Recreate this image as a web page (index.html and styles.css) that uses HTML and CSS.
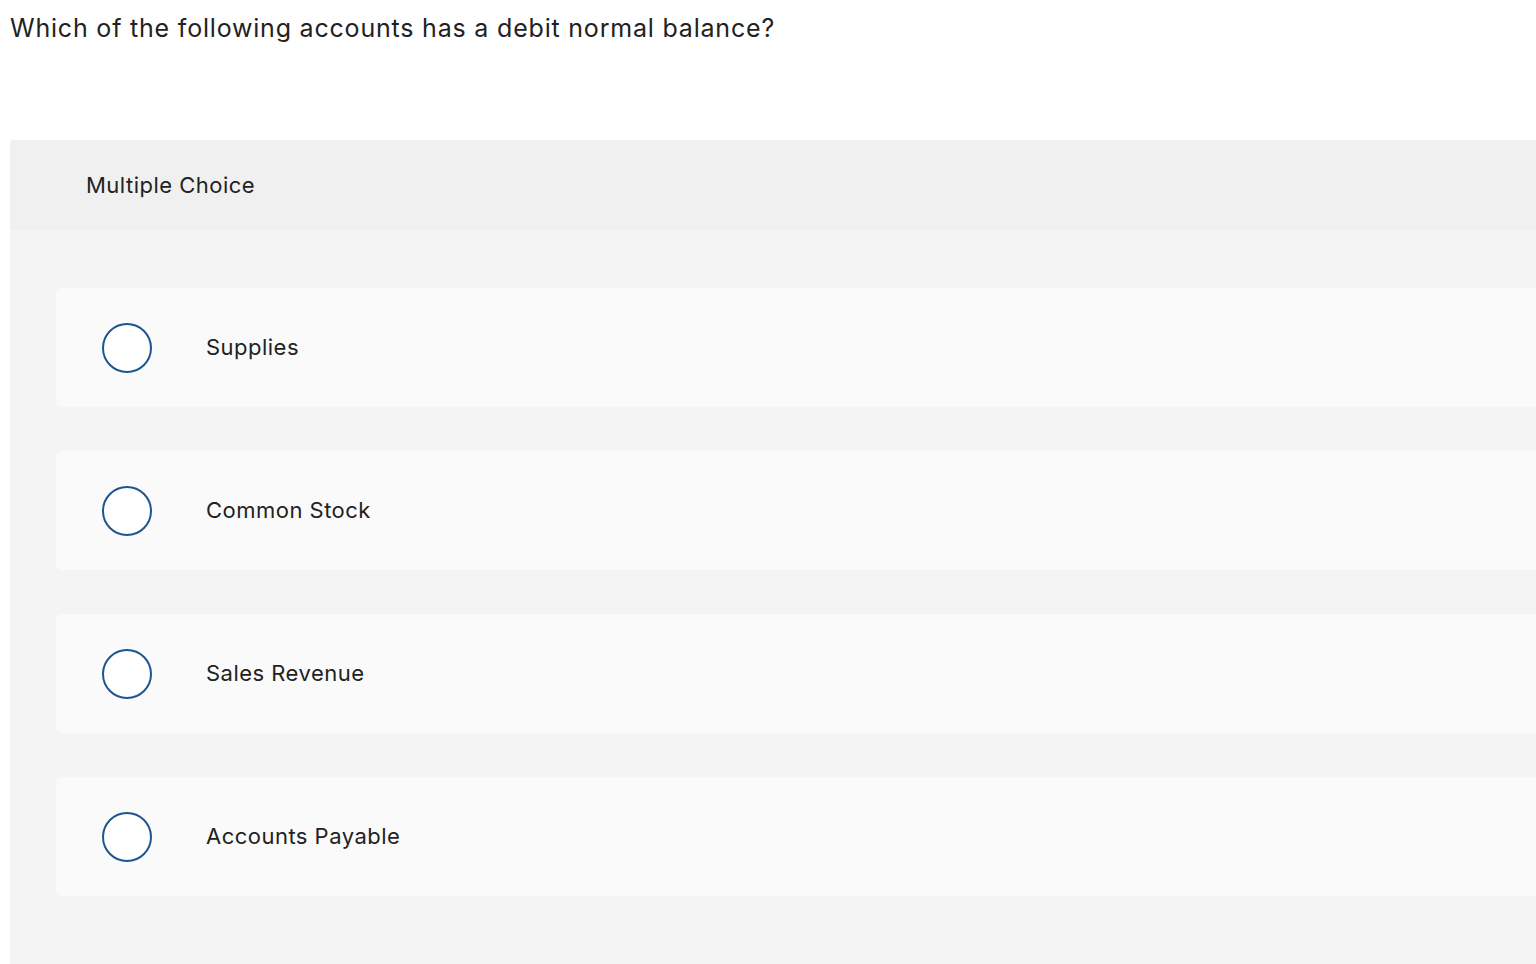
FILE: index.html
```html
<!DOCTYPE html>
<html lang="en">
  <head>
    <meta charset="UTF-8" />
    <title>Multiple Choice Question</title>
    <link rel="stylesheet" href="styles.css">
  </head>
  <body>
    <div class="question">Which of the following accounts has a debit normal balance?</div>

    <div class="answer-panel">
      <div class="panel-header">Multiple Choice</div>
      <div class="choice-list">
        <label class="choice">
          <span class="radio"></span>
          <span class="choice-text">Supplies</span>
        </label>
        <label class="choice">
          <span class="radio"></span>
          <span class="choice-text">Common Stock</span>
        </label>
        <label class="choice">
          <span class="radio"></span>
          <span class="choice-text">Sales Revenue</span>
        </label>
        <label class="choice">
          <span class="radio"></span>
          <span class="choice-text">Accounts Payable</span>
        </label>
      </div>
    </div>
  </body>
</html>
```

FILE: styles.css
```css
html,
body {
  overflow: hidden;
}

body {
  margin: 0;
  background: #fff;
  color: #222;
  font-family: Inter, Lato, sans-serif;
  letter-spacing: 0.03em;
}

.question {
  padding: 11px 10px 0;
  font-size: 25px;
  line-height: 34px;
  letter-spacing: 0.8px;
  height: 140px;
  box-sizing: border-box;
}

.answer-panel {
  margin-left: 10px;
  background: #f4f4f4;
  border-radius: 4px 0 0 0;
  min-height: 900px;
}

.panel-header {
  height: 90px;
  display: flex;
  align-items: center;
  padding-left: 76px;
  background: #f0f0f0;
  border-radius: 4px 0 0 0;
  font-size: 22px;
}

.choice-list {
  display: flex;
  flex-direction: column;
  gap: 44px;
  padding: 58px 0 0 46px;
}

.choice {
  height: 119px;
  display: flex;
  align-items: center;
  padding-left: 46px;
  background: #fafafa;
  border-radius: 5px 0 0 5px;
  cursor: pointer;
}

.radio {
  width: 46px;
  height: 46px;
  border: 2px solid #1b5690;
  border-radius: 50%;
  background: #fff;
  flex-shrink: 0;
}

.choice-text {
  margin-left: 54px;
  margin-bottom: 2px;
  font-size: 22px;
}
```
